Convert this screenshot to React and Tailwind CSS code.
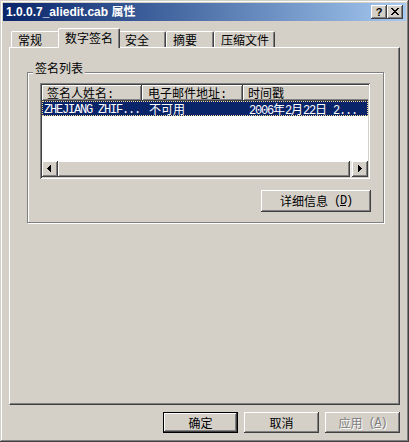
import React from "react";

const RAISED =
  "shadow-[inset_-1px_-1px_0_#404040,inset_1px_1px_0_#ffffff,inset_-2px_-2px_0_#808080,inset_2px_2px_0_#d4d0c8]";
const HEADER =
  "shadow-[inset_-1px_-1px_0_#404040,inset_1px_1px_0_#ffffff,inset_-2px_-2px_0_#808080]";

function T({ s }) {
  const parts = s.match(/[\x00-\x7f]+|[^\x00-\x7f]+/g) || [];
  return parts.map((p, i) =>
    /^[\x00-\x7f]/.test(p) ? (
      <span key={i} className="font-['Liberation_Mono',monospace] tracking-[-1.2px] whitespace-pre">
        {p}
      </span>
    ) : (
      <span key={i} className="font-['Noto_Sans_CJK_SC',sans-serif]">
        {p}
      </span>
    )
  );
}

function Tab({ label, w, selected }) {
  if (selected) {
    return (
      <div className="relative z-10 -mx-[2px] -mb-[1px] h-[20px] w-[62px] shrink-0 rounded-t-[2px] border-t border-l border-r border-t-white border-l-white border-r-[#404040] bg-[#d4d0c8] pl-[6px] pt-[1px] leading-[15px] shadow-[inset_-1px_0_0_#808080]">
        <T s={label} />
      </div>
    );
  }
  return (
    <div
      className={`h-[16px] shrink-0 rounded-t-[2px] border-t border-l border-r border-t-white border-l-white border-r-[#404040] pl-[6px] leading-[15px] shadow-[inset_-1px_0_0_#808080] ${w}`}
    >
      <T s={label} />
    </div>
  );
}

function LeftArrow() {
  return (
    <svg width="16" height="16" viewBox="0 0 16 16" shapeRendering="crispEdges">
      <rect x="5" y="7" width="1" height="1" fill="#000" />
      <rect x="6" y="6" width="1" height="3" fill="#000" />
      <rect x="7" y="5" width="1" height="5" fill="#000" />
      <rect x="8" y="4" width="1" height="7" fill="#000" />
    </svg>
  );
}

function RightArrow() {
  return (
    <svg width="16" height="16" viewBox="0 0 16 16" shapeRendering="crispEdges">
      <rect x="6" y="4" width="1" height="7" fill="#000" />
      <rect x="7" y="5" width="1" height="5" fill="#000" />
      <rect x="8" y="6" width="1" height="3" fill="#000" />
      <rect x="9" y="7" width="1" height="1" fill="#000" />
    </svg>
  );
}

function CloseGlyph() {
  const rows = [0, 1, 2, 3, 4, 5, 6];
  return (
    <svg width="16" height="14" viewBox="0 0 16 14" shapeRendering="crispEdges">
      {rows.map((r) => (
        <g key={r}>
          <rect x={4 + r} y={3 + r} width="2" height="1" fill="#000" />
          <rect x={10 - r} y={3 + r} width="2" height="1" fill="#000" />
        </g>
      ))}
    </svg>
  );
}

export default function App() {
  return (
    <div
      className={`flex h-[442px] w-[409px] flex-col bg-[#d4d0c8] p-[3px] text-[12px] text-black shadow-[inset_-1px_-1px_0_#404040,inset_1px_1px_0_#d4d0c8,inset_-2px_-2px_0_#808080,inset_2px_2px_0_#ffffff]`}
    >
      {/* Caption */}
      <div className="flex h-[18px] shrink-0 items-center bg-linear-to-r from-[#0a246a] to-[#a6caf0] pl-[3px] pr-[3px]">
        <div className="flex-1 font-['Liberation_Sans','Noto_Sans_CJK_SC',sans-serif] text-[12px] font-bold leading-[18px] text-white">
          1.0.0.7_aliedit.cab 属性
        </div>
        <div className={`flex h-[14px] w-[16px] items-center justify-center bg-[#d4d0c8] ${RAISED}`}>
          <span className="font-['Liberation_Sans',sans-serif] text-[11px] font-bold leading-none">?</span>
        </div>
        <div className={`h-[14px] w-[16px] bg-[#d4d0c8] ${RAISED}`}>
          <CloseGlyph />
        </div>
      </div>

      {/* Tab control */}
      <div className="ml-[6px] mt-[7px] w-[391px]">
        <div className="flex h-[19px] items-end pl-[2px]">
          <Tab label="常规" w="w-[49px]" />
          <div className="w-[58px] shrink-0">
            <Tab label="数字签名" selected />
          </div>
          <Tab label="安全" w="w-[48px]" />
          <Tab label="摘要" w="w-[48px]" />
          <Tab label="压缩文件" w="w-[61px]" />
        </div>
        <div className="h-[358px] w-[391px] border border-t-white border-l-white border-r-[#404040] border-b-[#404040] shadow-[inset_-1px_-1px_0_#808080]">
          {/* Group box */}
          <div className="relative ml-[17px] mt-[24px] w-[357px] border border-[#808080] px-[12px] pb-[10px] pt-[10px] shadow-[1px_1px_0_#ffffff,inset_1px_1px_0_#ffffff]">
            <div className="absolute left-[5px] top-[-12px] bg-[#d4d0c8] px-[2px] leading-[14px]">
              <T s="签名列表" />
            </div>

            {/* List view */}
            <div className="flex h-[96px] w-[330px] flex-col bg-white p-[2px] shadow-[inset_1px_1px_0_#808080,inset_-1px_-1px_0_#ffffff,inset_2px_2px_0_#404040,inset_-2px_-2px_0_#d4d0c8]">
              <div className="flex flex-1 flex-col overflow-hidden">
                <div className="flex h-[16px] shrink-0">
                  <div className={`h-[16px] w-[100px] shrink-0 bg-[#d4d0c8] pl-[5px] leading-[16px] ${HEADER}`}>
                    <T s="签名人姓名:" />
                  </div>
                  <div className={`h-[16px] w-[101px] shrink-0 bg-[#d4d0c8] pl-[6px] leading-[16px] ${HEADER}`}>
                    <T s="电子邮件地址:" />
                  </div>
                  <div className={`h-[16px] w-[130px] shrink-0 bg-[#d4d0c8] pl-[5px] leading-[16px] ${HEADER}`}>
                    <T s="时间戳" />
                  </div>
                </div>
                <div className="flex h-[15px] shrink-0 border border-dotted border-[#f5db95] bg-[#0a246a] leading-[13px] text-white">
                  <div className="w-[100px] shrink-0 pl-[1px]">
                    <T s="ZHEJIANG ZHIF..." />
                  </div>
                  <div className="w-[101px] shrink-0 pl-[6px]">
                    <T s="不可用" />
                  </div>
                  <div className="flex-1 whitespace-nowrap pl-[5px]">
                    <T s="2006年2月22日 2..." />
                  </div>
                </div>
                <div className="flex-1" />
                <div className="flex h-[16px] shrink-0 bg-[#ebe9e5]">
                  <div className={`h-[16px] w-[16px] shrink-0 bg-[#d4d0c8] ${RAISED}`}>
                    <LeftArrow />
                  </div>
                  <div className={`h-[16px] flex-1 bg-[#d4d0c8] ${RAISED}`} />
                  <div className="w-[2px] shrink-0" />
                  <div className={`h-[16px] w-[16px] shrink-0 bg-[#d4d0c8] ${RAISED}`}>
                    <RightArrow />
                  </div>
                </div>
              </div>
            </div>

            <div className="mt-[11px] flex justify-end">
              <div className={`flex h-[22px] w-[110px] items-center justify-center bg-[#d4d0c8] leading-[14px] ${RAISED}`}>
                <T s="详细信息 (" />
                <span className="font-['Liberation_Mono',monospace] tracking-[-1.2px] underline">D</span>
                <T s=")" />
              </div>
            </div>
          </div>
        </div>
      </div>

      {/* Buttons */}
      <div className="mt-[7px] flex justify-end gap-[6px] pr-[6px]">
        <div className={`flex h-[21px] w-[75px] items-center justify-center border border-black bg-[#d4d0c8] leading-[14px] ${RAISED}`}>
          <T s="确定" />
        </div>
        <div className={`flex h-[21px] w-[75px] items-center justify-center bg-[#d4d0c8] leading-[14px] ${RAISED}`}>
          <T s="取消" />
        </div>
        <div className={`flex h-[21px] w-[75px] items-center justify-center bg-[#d4d0c8] leading-[14px] text-[#808080] [text-shadow:1px_1px_0_#ffffff] ${RAISED}`}>
          <T s="应用 (" />
          <span className="font-['Liberation_Mono',monospace] tracking-[-1.2px] underline">A</span>
          <T s=")" />
        </div>
      </div>
    </div>
  );
}
